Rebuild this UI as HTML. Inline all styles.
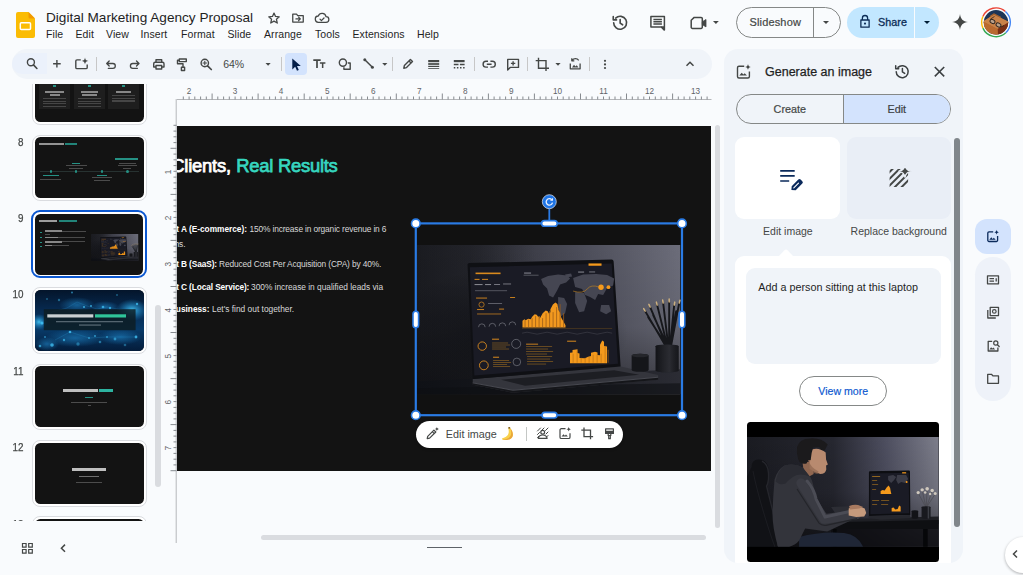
<!DOCTYPE html>
<html>
<head>
<meta charset="utf-8">
<style>
*{box-sizing:border-box;margin:0;padding:0}
html,body{width:1023px;height:575px;overflow:hidden;background:#f9fbfd;font-family:"Liberation Sans",sans-serif;color:#1f1f1f}
.abs{position:absolute}
.t{position:absolute;white-space:nowrap;line-height:1}
svg{position:absolute;overflow:visible}
#title{left:46px;top:10.500px;font-size:13.600px;color:#1f1f1f}
.menu{top:29px;font-size:10.500px;color:#1f1f1f;letter-spacing:.080px}
#toolbar{left:12px;top:49px;width:700px;height:30px;border-radius:15px;background:#f0f4f9}
.sep{position:absolute;width:1px;background:#c7c7c7;top:57px;height:14px}
.thumb{position:absolute;left:32px;width:114.500px;height:66.500px;border:1px solid #dadce0;border-radius:8px;background:#fff}
.thumb .in{position:absolute;left:1.700px;top:1.700px;width:109px;height:61px;border-radius:5.500px;background:#131313;overflow:hidden}
.num{position:absolute;font-size:11.200px;color:#444746;width:23.400px;text-align:right;left:0;line-height:1;transform:scaleX(.88);transform-origin:right center;-webkit-text-stroke:.250px #444746}
.ic{stroke:#444746;fill:none;stroke-width:1.500;stroke-linecap:round;stroke-linejoin:round}
.fi{fill:#444746;stroke:none}
.b{font-size:8.300px;font-weight:bold;color:#fff}
.r{font-size:8.400px;color:#d8d8d8;letter-spacing:-.170px}
</style>
</head>
<body>
<!-- HEADER -->
<svg style="left:16px;top:12px" width="19" height="26" viewBox="0 0 19 26"><path d="M2 0h10.500L19 6.500V24a2 2 0 0 1-2 2H2a2 2 0 0 1-2-2V2a2 2 0 0 1 2-2z" fill="#fbbc04"/><path d="M12.500 0L19 6.500h-5a1.500 1.500 0 0 1-1.500-1.500z" fill="#f29900"/><rect x="4.300" y="10.700" width="10.200" height="6.800" rx="1" fill="none" stroke="#fff" stroke-width="1.500"/></svg>
<div class="t" id="title">Digital Marketing Agency Proposal</div>
<div class="t menu" style="left:46px">File</div>
<div class="t menu" style="left:75.500px">Edit</div>
<div class="t menu" style="left:106px">View</div>
<div class="t menu" style="left:140.500px">Insert</div>
<div class="t menu" style="left:181px">Format</div>
<div class="t menu" style="left:227.500px">Slide</div>
<div class="t menu" style="left:264px">Arrange</div>
<div class="t menu" style="left:315px">Tools</div>
<div class="t menu" style="left:352.500px">Extensions</div>
<div class="t menu" style="left:417px">Help</div>
<!-- title icons -->
<svg style="left:267px;top:11px" width="14" height="14" viewBox="0 0 24 24"><path class="ic" style="stroke-width:2.200" d="M12 3.500l2.600 5.900 6.400.600-4.800 4.300 1.400 6.300L12 17.300l-5.600 3.300 1.400-6.300L3 10l6.400-.600z"/></svg>
<svg style="left:291px;top:10.500px" width="14" height="14" viewBox="0 0 24 24"><path class="ic" style="stroke-width:2.200" d="M3 5.500h6.500l2 2.500H21v11H3z M8.500 13.500h7 M13 10.500l3 3-3 3"/></svg>
<svg style="left:314px;top:11px" width="16" height="14" viewBox="0 0 28 24"><path class="ic" style="stroke-width:2.200" d="M8 19.500a5.500 5.500 0 0 1-.500-11A7 7 0 0 1 21 9.500a5 5 0 0 1 0 10z M10.500 14l2.500 2.500 4.500-4.500"/></svg>
<!-- right header -->
<svg style="left:610.200px;top:12.700px" width="19.500" height="19.500" viewBox="0 0 24 24"><path class="ic" style="stroke-width:2" d="M4.500 12a8 8 0 1 0 2.500-5.800 M4 4.500v4h4 M12.500 8v4.500l3 2"/></svg>
<svg style="left:0;top:0" width="1023" height="45" viewBox="0 0 1023 45"><path class="ic" style="stroke-width:1.500" d="M650.900 16.500h13.500v10.400h-13.500zM664.400 26.900v3.200l-3.200-3.200"/><path d="M661.200 26.900h3.200v3.200z" fill="#444746"/><path class="ic" style="stroke-width:1.500;stroke-linecap:butt" d="M653.400 19.500h8.500M653.400 21.700h8.500M653.400 23.900h8.500"/></svg>
<svg style="left:0;top:0" width="1023" height="45" viewBox="0 0 1023 45"><path class="ic" style="stroke-width:1.500" d="M691.200 20.300l3-2.900h6.900a1.200 1.200 0 0 1 1.200 1.200v8.600a1.200 1.200 0 0 1-1.200 1.200h-8.700a1.200 1.200 0 0 1-1.200-1.200z"/><path d="M702.300 21.800l3.700-2.300v7.400l-3.700-2.300z" fill="#444746" stroke="#444746" stroke-width=".800" stroke-linejoin="round"/></svg>
<svg style="left:713.200px;top:20.800px" width="5.800" height="3" viewBox="0 0 10 5"><path d="M0 0h10L5 5z" fill="#444746"/></svg>
<div class="abs" style="left:736px;top:7px;width:104.500px;height:30.500px;border:1px solid #858887;border-radius:16px"></div>
<div class="abs" style="left:813px;top:7px;width:1px;height:30.500px;background:#858887"></div>
<div class="t" style="left:749.500px;top:17px;font-size:11px;color:#444746;letter-spacing:.150px;-webkit-text-stroke:.200px #444746">Slideshow</div>
<svg style="left:823px;top:20.500px" width="6" height="3.100" viewBox="0 0 10 5"><path d="M0 0h10L5 5z" fill="#444746"/></svg>
<div class="abs" style="left:846.500px;top:7px;width:92.500px;height:30.500px;border-radius:16px;background:#c2e7ff"></div>
<div class="abs" style="left:914px;top:7px;width:1px;height:30.500px;background:#f9fbfd"></div>
<svg style="left:858.500px;top:14px" width="12" height="15" viewBox="0 0 16 20"><path d="M4.500 8V5.500a3.500 3.500 0 0 1 7 0V8 M2.500 8h11v9.500h-11z" fill="none" stroke="#0c2d57" stroke-width="1.700" stroke-linejoin="round"/><circle cx="8" cy="12.800" r="1.400" fill="#0c2d57"/></svg>
<div class="t" style="left:878px;top:17px;font-size:10.800px;color:#0c2d57;-webkit-text-stroke:.300px #0c2d57;letter-spacing:.050px">Share</div>
<svg style="left:923.500px;top:20.500px" width="6" height="3.100" viewBox="0 0 10 5"><path d="M0 0h10L5 5z" fill="#001d35"/></svg>
<svg style="left:952px;top:14.300px" width="16" height="16" viewBox="0 0 24 24"><path d="M12 0C12.900 7.500 16.500 11.100 24 12 16.500 12.900 12.900 16.500 12 24 11.100 16.500 7.500 12.900 0 12 7.500 11.100 11.100 7.500 12 0z" fill="#444746"/></svg>
<!-- avatar -->
<svg style="left:981px;top:7px" width="30" height="31" viewBox="0 0 30 31">
<defs><clipPath id="avc"><circle cx="15" cy="15.300" r="12.200"/></clipPath></defs>
<path d="M1.89 9.46A14.350 14.350 0 0 1 24.41 4.47" fill="none" stroke="#ea4335" stroke-width="1.400"/><path d="M24.41 4.47A14.350 14.350 0 0 1 24.79 25.79" fill="none" stroke="#4285f4" stroke-width="1.400"/><path d="M24.79 25.79A14.350 14.350 0 0 1 1.89 21.14" fill="none" stroke="#34a853" stroke-width="1.400"/><path d="M1.89 21.14A14.350 14.350 0 0 1 1.89 9.46" fill="none" stroke="#fbbc04" stroke-width="1.400"/>
<g clip-path="url(#avc)"><rect width="30" height="31" fill="#1d3557"/>
<path d="M2 14.500L13 7.500 28 15 27.500 20 17 29 2 22z" fill="#b5652c"/>
<path d="M2 14.500L13 7.500 28 15 16.500 22z" fill="#c98248"/>
<path d="M16.500 22L28 15 28 23 17 31z" fill="#7a2f14"/>
<path d="M2 14.500L16.500 22 17 31 2 24z" fill="#b96a30"/>
<path d="M9 9.500l4-2.500 7 3.500" stroke="#a8642e" stroke-width="1.300" fill="none"/>
<ellipse cx="11.500" cy="14.500" rx="2.600" ry="1.900" transform="rotate(28 11.500 14.500)" fill="#b9a08a" stroke="#2b2320" stroke-width=".900"/>
<ellipse cx="17.500" cy="18" rx="2.600" ry="1.900" transform="rotate(28 17.500 18)" fill="#b9a08a" stroke="#2b2320" stroke-width=".900"/>
<path d="M9.500 12l4-2.500M20 20l3-1.500" stroke="#2b2320" stroke-width=".800"/></g>
</svg>

<!-- TOOLBAR -->
<div class="abs" id="toolbar"></div>
<div class="abs" style="left:12px;top:53px;width:35px;height:20.500px;background:#ebf1fb;border-radius:10px 0 0 10px"></div>
<div class="abs" style="left:284.700px;top:52.700px;width:22.200px;height:22px;border-radius:4px;background:#d3e3fd"></div>
<div class="sep" style="left:96px"></div>
<div class="sep" style="left:281px"></div>
<div class="sep" style="left:392px"></div>
<div class="sep" style="left:474px"></div>
<div class="sep" style="left:527px"></div>
<div class="sep" style="left:589px"></div>
<svg style="left:0;top:0" width="1023" height="100" viewBox="0 0 1023 100">
<!-- search -->
<circle class="ic" cx="30.900" cy="62.200" r="3.500" style="stroke-width:1.400"/><path class="ic" d="M33.500 64.900l3.400 3.600" style="stroke-width:1.600"/>
<!-- plus -->
<path class="ic" d="M53.100 63.800h7.600M56.900 60v7.600" style="stroke-linecap:butt;stroke-width:1.400"/>
<!-- new slide -->
<path class="ic" d="M80.800 59.900h-3.800a1.200 1.200 0 0 0-1.200 1.200v6.300a1.200 1.200 0 0 0 1.200 1.200h9a1.200 1.200 0 0 0 1.200-1.200v-2.900" style="stroke-linecap:butt;stroke-width:1.400"/><path class="fi" d="M85 57.600c.3 2.200 1.200 3.100 3.400 3.400-2.200.300-3.100 1.200-3.400 3.400-.300-2.200-1.200-3.100-3.400-3.400 2.200-.300 3.100-1.200 3.400-3.400z"/>
<!-- undo -->
<path class="ic" d="M108.300 68.300h4.600a2.400 2.400 0 0 0 0-4.800h-6M109.200 61l-2.500 2.500 2.500 2.500" style="stroke-width:1.300"/>
<!-- redo -->
<path class="ic" d="M137.400 68.300h-4.600a2.400 2.400 0 0 1 0-4.800h6M136.500 61l2.500 2.500-2.500 2.500" style="stroke-width:1.300"/>
<!-- print -->
<path class="ic" d="M156 62.200v-2.400h5.700v2.400M156 67h-2.300v-3.300a1.500 1.500 0 0 1 1.500-1.500h7.300a1.500 1.500 0 0 1 1.500 1.500v3.300h-2.300M156 65.500h5.700v3.500h-5.700z" style="stroke-width:1.400"/>
<!-- paint -->
<path class="ic" d="M179.300 59h7v2.600h-7zM179.300 60.200h-1.800v3.600h5.500v3M181.400 67.200h3.200v3.300h-3.200z" style="stroke-width:1.400"/>
<!-- zoom -->
<circle class="ic" cx="204.800" cy="63" r="3.700" style="stroke-width:1.400"/><path class="ic" d="M207.600 65.800l3.700 3.700" style="stroke-width:1.700"/><path class="ic" d="M203 63h3.600M204.800 61.200v3.600" style="stroke-width:1.100"/>
<!-- dropdown -->
<path class="fi" d="M265.500 63h5.200l-2.600 2.700z"/>
<!-- cursor -->
<path d="M292.300 58.600v11l2.900-2.800 1.800 4 1.800-.800-1.800-4h3.800z" fill="#041e49"/>
<!-- Tt -->
<path class="fi" d="M313.300 59.300h7.400v1.700h-2.850v6.900h-1.700v-6.900h-2.850zM319.900 62.200h5.500v1.500h-2v4.200h-1.500v-4.200h-2z"/>
<!-- shape -->
<circle class="ic" cx="342.900" cy="62.600" r="3.600" style="stroke-width:1.400"/><path class="ic" d="M347.800 63h2.400v6.300h-6.300v-2" style="stroke-width:1.400;stroke-linecap:butt"/>
<!-- line -->
<path class="ic" d="M364.800 59.700l7.600 7.600" style="stroke-width:1.500"/><circle class="fi" cx="364.800" cy="59.700" r="1.500"/><circle class="fi" cx="372.400" cy="67.300" r="1.500"/>
<path class="fi" d="M382.200 63h5.200l-2.600 2.700z"/>
<!-- pen -->
<path class="ic" d="M403.800 68.200l.600-2.700 6-6 2.100 2.100-6 6zM409 60.900l2.100 2.100" style="stroke-width:1.400"/>
<!-- line weight -->
<path d="M428.200 61.100h11" stroke="#444746" stroke-width="2.200"/><path d="M428.200 64h11" stroke="#444746" stroke-width="1.700"/><path d="M428.200 66.400h11" stroke="#444746" stroke-width="1.200"/><path d="M428.200 68.500h11" stroke="#444746" stroke-width=".800"/>
<!-- line dash -->
<path d="M453.800 61.100h10.800" stroke="#444746" stroke-width="2.200"/><path d="M453.800 64.500h10.800" stroke="#444746" stroke-width="1.500" stroke-dasharray="4.700 1.400"/><path d="M453.800 67.800h10.800" stroke="#444746" stroke-width="1.400" stroke-dasharray="1.500 1.600"/>
<!-- link -->
<path class="ic" d="M488 61.300h-2a2.900 2.900 0 0 0 0 5.800h2M490.400 61.300h2a2.900 2.900 0 0 1 0 5.800h-2M486.800 64.200h4.800" style="stroke-width:1.400;stroke-linecap:butt"/>
<!-- comment add -->
<path class="ic" d="M507.700 59.400h10.800v8h-8.300l-2.500 2.500zM513.100 61.200v4.400M510.900 63.400h4.400" style="stroke-width:1.400;stroke-linecap:butt"/>
<!-- crop -->
<path class="ic" d="M538.500 57.800v10.400h10.500M535.700 60.600h10.300v10.300" style="stroke-width:1.400;stroke-linecap:butt;stroke-linejoin:miter"/>
<path class="fi" d="M555.400 63h5.200l-2.600 2.700z"/>
<!-- replace image -->
<path class="ic" d="M570.300 63.500v5.300h9.800v-5.300M572.200 60.300a4 4 0 0 1 6.500 0M571.800 58.300v2.500h2.500" style="stroke-width:1.300;stroke-linecap:butt"/><path class="fi" d="M572 67.400l2-2.600 1.500 1.800 1.200-1.300 1.800 2.100z"/>
<!-- dots -->
<circle class="fi" cx="605" cy="60.800" r="1.100"/><circle class="fi" cx="605" cy="64.400" r="1.100"/><circle class="fi" cx="605" cy="68" r="1.100"/>
<!-- chevron up -->
<path class="ic" d="M686.500 65.800l3.500-3.500 3.500 3.500" style="stroke-width:1.500;stroke-linecap:butt;stroke-linejoin:miter"/>
</svg>
<div class="t" style="left:223.200px;top:58.800px;font-size:10.500px;color:#444746">64%</div>

<!-- FILMSTRIP -->
<div class="abs" style="left:0;top:83.500px;width:162px;height:437.600px;overflow:hidden">
<div class="thumb" style="top:-25.4px"><div class="in"><div class="abs" style="left:0;top:0;width:109px;height:61px;opacity:.780;filter:blur(.300px)"><div class="abs" style="left:4.800px;top:20px;width:30.800px;height:28.100px;background:#222"></div><div class="abs" style="left:39.200px;top:20px;width:30.800px;height:28.100px;background:#222"></div><div class="abs" style="left:73.200px;top:20px;width:30.800px;height:28.100px;background:#222"></div>
<div class="abs" style="left:18.700px;top:24px;width:3px;height:2.500px;background:#2bb5a4"></div><div class="abs" style="left:53px;top:24px;width:3px;height:2.500px;background:#2bb5a4"></div><div class="abs" style="left:87px;top:24px;width:3px;height:2.500px;background:#2bb5a4"></div>
<div class="abs" style="left:10.500px;top:30.300px;width:19px;height:1.700px;background:#aaa"></div><div class="abs" style="left:15px;top:33.100px;width:10px;height:1.700px;background:#aaa"></div>
<div class="abs" style="left:46px;top:30.300px;width:17px;height:1.700px;background:#aaa"></div><div class="abs" style="left:47px;top:33.100px;width:15px;height:1.700px;background:#aaa"></div>
<div class="abs" style="left:81px;top:30.300px;width:15px;height:1.700px;background:#aaa"></div>
<div class="abs" style="left:8.500px;top:37px;width:23px;height:10px;background:repeating-linear-gradient(#555 0 1px,#222 1px 2.750px)"></div>
<div class="abs" style="left:43px;top:37px;width:23px;height:10px;background:repeating-linear-gradient(#555 0 1px,#222 1px 2.750px)"></div>
<div class="abs" style="left:77px;top:34.300px;width:23px;height:7.500px;background:repeating-linear-gradient(#555 0 1px,#222 1px 2.750px)"></div></div></div></div>
<div class="num" style="top:-23.2px">7</div>
<div class="thumb" style="top:51.0px"><div class="in"><div class="abs" style="left:0;top:0;width:109px;height:61px;opacity:.780;filter:blur(.300px)"><div class="abs" style="left:4.500px;top:6px;width:25px;height:2px;background:#b8b8b8"></div><div class="abs" style="left:30.500px;top:6px;width:12px;height:2px;background:#27a596"></div>
<div class="abs" style="left:5px;top:34.200px;width:99px;height:.700px;background:#2e3b3a"></div>
<div class="abs" style="left:15px;top:33.200px;width:2.500px;height:2.500px;border-radius:2px;background:#2bb5a4"></div><div class="abs" style="left:40px;top:33.200px;width:2.500px;height:2.500px;border-radius:2px;background:#2bb5a4"></div><div class="abs" style="left:66px;top:33.200px;width:2.500px;height:2.500px;border-radius:2px;background:#2bb5a4"></div><div class="abs" style="left:91.500px;top:33.200px;width:2.500px;height:2.500px;border-radius:2px;background:#2bb5a4"></div>
<div class="abs" style="left:8px;top:37.500px;width:16px;height:1.500px;background:#2bb5a4"></div><div class="abs" style="left:5.500px;top:42px;width:21px;height:1px;background:#5c5c5c"></div>
<div class="abs" style="left:37px;top:25.500px;width:8px;height:1.500px;background:#2bb5a4"></div><div class="abs" style="left:31px;top:28.300px;width:21px;height:1px;background:#5c5c5c"></div><div class="abs" style="left:34px;top:31px;width:14px;height:1px;background:#5c5c5c"></div>
<div class="abs" style="left:62px;top:37.500px;width:10px;height:1.500px;background:#2bb5a4"></div><div class="abs" style="left:57px;top:39.800px;width:20px;height:1px;background:#5c5c5c"></div><div class="abs" style="left:59px;top:42.500px;width:16px;height:1px;background:#5c5c5c"></div>
<div class="abs" style="left:80.500px;top:21px;width:23px;height:1.500px;background:#2bb5a4"></div><div class="abs" style="left:84px;top:25.500px;width:17px;height:1px;background:#5c5c5c"></div><div class="abs" style="left:83px;top:28.300px;width:19px;height:1px;background:#5c5c5c"></div><div class="abs" style="left:88px;top:31px;width:8px;height:1px;background:#5c5c5c"></div></div></div></div>
<div class="num" style="top:53.2px">8</div>
<div class="abs" style="left:31px;top:126.3px;width:115.900px;height:68.600px;border:2.200px solid #0b57d0;border-radius:9px;background:#fff"></div>
<div class="abs" style="left:34.700px;top:130.1px;width:108.600px;height:61px;border-radius:5.500px;background:#131313;overflow:hidden"><div class="abs" style="left:0;top:0;width:109px;height:61px;opacity:.780;filter:blur(.300px)"><div class="abs" style="left:4.500px;top:6px;width:18px;height:2.200px;background:#c4c4c4"></div><div class="abs" style="left:24.200px;top:6px;width:18.600px;height:2.200px;background:#27a596"></div>
<div class="abs" style="left:5px;top:18px;width:2px;height:1px;background:#2bb5a4"></div><div class="abs" style="left:5px;top:23.800px;width:2px;height:1px;background:#2bb5a4"></div><div class="abs" style="left:5px;top:28px;width:2px;height:1px;background:#2bb5a4"></div><div class="abs" style="left:5px;top:32px;width:2px;height:1px;background:#2bb5a4"></div>
<div class="abs" style="left:10px;top:16.800px;width:17px;height:1.600px;background:#a9a9a9"></div><div class="abs" style="left:27px;top:17px;width:24px;height:1.200px;background:#5a5a5a"></div><div class="abs" style="left:10px;top:20.300px;width:5px;height:1px;background:#5a5a5a"></div>
<div class="abs" style="left:10px;top:23.300px;width:13px;height:1.600px;background:#a9a9a9"></div><div class="abs" style="left:23px;top:23.500px;width:27px;height:1.200px;background:#5a5a5a"></div>
<div class="abs" style="left:10px;top:27.500px;width:17px;height:1.600px;background:#a9a9a9"></div><div class="abs" style="left:27px;top:27.700px;width:23px;height:1.200px;background:#5a5a5a"></div>
<div class="abs" style="left:10px;top:31.300px;width:7px;height:1.600px;background:#a9a9a9"></div><div class="abs" style="left:17px;top:31.500px;width:17px;height:1.200px;background:#5a5a5a"></div>
</div><svg style="left:56.400px;top:20.700px;filter:blur(.300px)" width="47.200" height="26.700" viewBox="0 0 263 149" preserveAspectRatio="none"><use href="#photo1"/></svg></div>
<div class="num" style="top:129.6px">9</div>
<div class="thumb" style="top:203.7px"><div class="in"><svg style="left:0;top:0;filter:blur(.350px)" width="109" height="61" viewBox="0 0 109 61"><defs>
<linearGradient id="t10bg" x1="0" y1="0" x2="0" y2="1"><stop offset="0" stop-color="#04152b"/><stop offset=".35" stop-color="#072b52"/><stop offset=".65" stop-color="#083a68"/><stop offset="1" stop-color="#041c3a"/></linearGradient>
<radialGradient id="t10a" cx="50%" cy="50%" r="50%"><stop offset="0" stop-color="#43c3f2" stop-opacity=".95"/><stop offset=".5" stop-color="#2a9fdc" stop-opacity=".5"/><stop offset="1" stop-color="#1e8ac4" stop-opacity="0"/></radialGradient>
<radialGradient id="t10b" cx="50%" cy="50%" r="50%"><stop offset="0" stop-color="#1b78b6" stop-opacity=".7"/><stop offset="1" stop-color="#1b78b6" stop-opacity="0"/></radialGradient></defs>
<rect width="109" height="61" fill="url(#t10bg)"/>
<ellipse cx="97" cy="20" rx="16" ry="11" fill="url(#t10a)"/><ellipse cx="4" cy="32" rx="9" ry="8" fill="url(#t10a)"/><ellipse cx="42" cy="15" rx="18" ry="8" fill="url(#t10b)"/><ellipse cx="70" cy="17" rx="14" ry="6" fill="url(#t10b)"/><ellipse cx="40" cy="48" rx="30" ry="9" fill="url(#t10b)"/><ellipse cx="85" cy="47" rx="22" ry="8" fill="url(#t10b)"/><ellipse cx="12" cy="54" rx="12" ry="7" fill="url(#t10b)"/>
<g fill="#3fbdf0"><circle cx="7" cy="33" r="1.600" opacity=".95"/><circle cx="35" cy="42" r="1.300" opacity=".9"/><circle cx="37" cy="2.500" r="1" opacity=".6"/><circle cx="24" cy="10" r="1.200" opacity=".45"/><circle cx="49" cy="17" r="1.100" opacity=".8"/><circle cx="56" cy="16" r="1" opacity=".8"/><circle cx="68" cy="17" r="1.300" opacity=".8"/><circle cx="75" cy="18" r="1.200" opacity=".8"/><circle cx="102" cy="14" r="1.200" opacity=".8"/><circle cx="101" cy="47" r="1.400" opacity=".85"/><circle cx="80" cy="49" r="1.400" opacity=".6"/><circle cx="72" cy="47" r="1.100" opacity=".6"/><circle cx="65" cy="52" r="1.300" opacity=".5"/><circle cx="60" cy="46" r="1" opacity=".7"/><circle cx="54" cy="48" r="1.100" opacity=".6"/><circle cx="43" cy="54" r="1.700" opacity=".45"/><circle cx="29" cy="50" r="1.200" opacity=".7"/><circle cx="17" cy="55" r="1.800" opacity=".8"/><circle cx="5" cy="56" r="1.300" opacity=".7"/><circle cx="10" cy="47" r="1" opacity=".6"/><circle cx="90" cy="55" r="1.300" opacity=".4"/><circle cx="12" cy="9" r="1" opacity=".4"/><circle cx="82" cy="5" r="1" opacity=".4"/></g>
<path d="M32 18L42 12 52 16 62 19 72 17 88 20M20 50L35 42 54 48 72 47 101 47M7 33L17 22 32 18" stroke="#2c9fd8" stroke-width=".350" fill="none" opacity=".6"/>
<rect x="8.800" y="19.200" width="91.800" height="21" fill="#0d1d22" opacity=".84"/>
<rect x="12.300" y="24.300" width="46" height="3.200" fill="#c9cfd2"/><rect x="60" y="24.300" width="31" height="3.200" fill="#2fc59a"/><rect x="21" y="31.300" width="67" height=".900" fill="#74848e"/><rect x="44" y="34.600" width="22" height=".900" fill="#74848e"/></svg></div></div>
<div class="num" style="top:205.9px">10</div>
<div class="thumb" style="top:280.1px"><div class="in"><div class="abs" style="left:0;top:0;width:109px;height:61px;opacity:.780;filter:blur(.300px)"><div class="abs" style="left:28.500px;top:22.500px;width:34.500px;height:3px;background:#f0f0f0"></div><div class="abs" style="left:64.500px;top:22.500px;width:14px;height:3px;background:#35e0c8"></div>
<div class="abs" style="left:50px;top:30.800px;width:8.500px;height:.900px;background:#2bb5a4"></div>
<div class="abs" style="left:36px;top:36px;width:36px;height:.900px;background:#5c5c5c"></div><div class="abs" style="left:53px;top:39px;width:3px;height:.900px;background:#5c5c5c"></div></div></div></div>
<div class="num" style="top:282.3px">11</div>
<div class="thumb" style="top:356.5px"><div class="in"><div class="abs" style="left:0;top:0;width:109px;height:61px;opacity:.780;filter:blur(.300px)"><div class="abs" style="left:37px;top:25px;width:34px;height:3.600px;background:#f0f0f0"></div>
<div class="abs" style="left:44px;top:33.500px;width:20px;height:1px;background:#8a8a8a"></div><div class="abs" style="left:41px;top:39px;width:26px;height:.900px;background:#5c5c5c"></div></div></div></div>
<div class="num" style="top:358.7px">12</div>
<div class="thumb" style="top:432.8px"><div class="in"></div></div>
<div class="num" style="top:435.0px">13</div>
</div>
<div class="abs" style="left:155.300px;top:305px;width:5.700px;height:182px;border-radius:3px;background:#dadce0"></div>
<svg style="left:0;top:530px" width="100" height="40" viewBox="0 530 100 40"><path d="M22.500 543.500h3.600v3.600h-3.600zM28.700 543.500h3.600v3.600h-3.600zM22.500 549.500h3.600v3.600h-3.600zM28.700 549.500h3.600v3.600h-3.600z" fill="none" stroke="#444746" stroke-width="1.200"/><path d="M65 544.600l-3.600 3.600 3.600 3.600" fill="none" stroke="#444746" stroke-width="1.500"/></svg>
<svg style="left:0;top:0" width="1023" height="575" viewBox="0 0 1023 575">
<path d="M177 99.5H711.5 M176.200 99V543" stroke="#b5b7ba" stroke-width="1" fill="none"/>
<path d="M183.3 99.5v-3 M189.1 99.5v-3 M194.8 99.5v-3 M200.6 99.5v-3 M206.3 99.5v-3 M212.1 99.5v-6 M217.8 99.5v-3 M223.6 99.5v-3 M229.3 99.5v-3 M235.1 99.5v-3 M240.9 99.5v-3 M246.6 99.5v-3 M252.4 99.5v-3 M258.1 99.5v-6 M263.9 99.5v-3 M269.6 99.5v-3 M275.4 99.5v-3 M281.1 99.5v-3 M286.9 99.5v-3 M292.7 99.5v-3 M298.4 99.5v-3 M304.2 99.5v-6 M309.9 99.5v-3 M315.7 99.5v-3 M321.4 99.5v-3 M327.2 99.5v-3 M333.0 99.5v-3 M338.7 99.5v-3 M344.5 99.5v-3 M350.2 99.5v-6 M356.0 99.5v-3 M361.7 99.5v-3 M367.5 99.5v-3 M373.2 99.5v-3 M379.0 99.5v-3 M384.8 99.5v-3 M390.5 99.5v-3 M396.3 99.5v-6 M402.0 99.5v-3 M407.8 99.5v-3 M413.5 99.5v-3 M419.3 99.5v-3 M425.1 99.5v-3 M430.8 99.5v-3 M436.6 99.5v-3 M442.3 99.5v-6 M448.1 99.5v-3 M453.8 99.5v-3 M459.6 99.5v-3 M465.3 99.5v-3 M471.1 99.5v-3 M476.9 99.5v-3 M482.6 99.5v-3 M488.4 99.5v-6 M494.1 99.5v-3 M499.9 99.5v-3 M505.6 99.5v-3 M511.4 99.5v-3 M517.2 99.5v-3 M522.9 99.5v-3 M528.7 99.5v-3 M534.4 99.5v-6 M540.2 99.5v-3 M545.9 99.5v-3 M551.7 99.5v-3 M557.5 99.5v-3 M563.2 99.5v-3 M569.0 99.5v-3 M574.7 99.5v-3 M580.5 99.5v-6 M586.2 99.5v-3 M592.0 99.5v-3 M597.7 99.5v-3 M603.5 99.5v-3 M609.3 99.5v-3 M615.0 99.5v-3 M620.8 99.5v-3 M626.5 99.5v-6 M632.3 99.5v-3 M638.0 99.5v-3 M643.8 99.5v-3 M649.5 99.5v-3 M655.3 99.5v-3 M661.1 99.5v-3 M666.8 99.5v-3 M672.6 99.5v-6 M678.3 99.5v-3 M684.1 99.5v-3 M689.8 99.5v-3 M695.6 99.5v-3 M701.4 99.5v-3 M707.1 99.5v-3" stroke="#868a8f" stroke-width="1" fill="none"/>
<path d="M176.5 125.3h-3 M176.5 131.1h-3 M176.5 136.8h-3 M176.5 142.6h-3 M176.5 148.3h-6 M176.5 154.1h-3 M176.5 159.8h-3 M176.5 165.6h-3 M176.5 171.3h-3 M176.5 177.1h-3 M176.5 182.9h-3 M176.5 188.6h-3 M176.5 194.4h-6 M176.5 200.1h-3 M176.5 205.9h-3 M176.5 211.6h-3 M176.5 217.4h-3 M176.5 223.2h-3 M176.5 228.9h-3 M176.5 234.7h-3 M176.5 240.4h-6 M176.5 246.2h-3 M176.5 251.9h-3 M176.5 257.7h-3 M176.5 263.4h-3 M176.5 269.2h-3 M176.5 275.0h-3 M176.5 280.7h-3 M176.5 286.5h-6 M176.5 292.2h-3 M176.5 298.0h-3 M176.5 303.7h-3 M176.5 309.5h-3 M176.5 315.3h-3 M176.5 321.0h-3 M176.5 326.8h-3 M176.5 332.5h-6 M176.5 338.3h-3 M176.5 344.0h-3 M176.5 349.8h-3 M176.5 355.6h-3 M176.5 361.3h-3 M176.5 367.1h-3 M176.5 372.8h-3 M176.5 378.6h-6 M176.5 384.3h-3 M176.5 390.1h-3 M176.5 395.8h-3 M176.5 401.6h-3 M176.5 407.4h-3 M176.5 413.1h-3 M176.5 418.9h-3 M176.5 424.6h-6 M176.5 430.4h-3 M176.5 436.1h-3 M176.5 441.9h-3 M176.5 447.6h-3 M176.5 453.4h-3 M176.5 459.2h-3 M176.5 464.9h-3 M176.5 470.7h-6" stroke="#868a8f" stroke-width="1" fill="none"/>
<g font-size="8.200" fill="#5f6368" font-family="Liberation Sans, sans-serif"><text x="189.1" y="93.8" text-anchor="middle">2</text><text x="235.1" y="93.8" text-anchor="middle">3</text><text x="281.1" y="93.8" text-anchor="middle">4</text><text x="327.2" y="93.8" text-anchor="middle">5</text><text x="373.2" y="93.8" text-anchor="middle">6</text><text x="419.3" y="93.8" text-anchor="middle">7</text><text x="465.3" y="93.8" text-anchor="middle">8</text><text x="511.4" y="93.8" text-anchor="middle">9</text><text x="557.5" y="93.8" text-anchor="middle">10</text><text x="603.5" y="93.8" text-anchor="middle">11</text><text x="649.5" y="93.8" text-anchor="middle">12</text><text x="695.6" y="93.8" text-anchor="middle">13</text><text transform="translate(171 171.9) rotate(-90)" text-anchor="middle">1</text><text transform="translate(171 218.0) rotate(-90)" text-anchor="middle">2</text><text transform="translate(171 264.1) rotate(-90)" text-anchor="middle">3</text><text transform="translate(171 310.1) rotate(-90)" text-anchor="middle">4</text><text transform="translate(171 356.2) rotate(-90)" text-anchor="middle">5</text><text transform="translate(171 402.2) rotate(-90)" text-anchor="middle">6</text><text transform="translate(171 448.2) rotate(-90)" text-anchor="middle">7</text></g>
</svg>
<svg width="0" height="0" style="left:0;top:0"><defs>
<linearGradient id="p1wall" x1="0" y1="0" x2="1" y2="0"><stop offset="0" stop-color="#23242a"/><stop offset=".25" stop-color="#2f3038"/><stop offset=".6" stop-color="#4a4b57"/><stop offset="1" stop-color="#6c6d7a"/></linearGradient>
<linearGradient id="p1shade" x1="0" y1="0" x2="0" y2="1"><stop offset="0" stop-color="#000" stop-opacity="0"/><stop offset=".55" stop-color="#000" stop-opacity=".08"/><stop offset="1" stop-color="#000" stop-opacity=".45"/></linearGradient>
<radialGradient id="p1lapsh" cx="35%" cy="60%" r="45%"><stop offset="0" stop-color="#0d0e12" stop-opacity=".75"/><stop offset="1" stop-color="#0d0e12" stop-opacity="0"/></radialGradient>
<linearGradient id="p1left" x1="0" y1="0" x2="1" y2="0"><stop offset="0" stop-color="#08090c" stop-opacity=".32"/><stop offset=".2" stop-color="#08090c" stop-opacity=".3"/><stop offset=".45" stop-color="#08090c" stop-opacity="0"/></linearGradient>
<linearGradient id="p1desk" x1="0" y1="0" x2="1" y2="0"><stop offset="0" stop-color="#0f1116"/><stop offset=".5" stop-color="#17181d"/><stop offset="1" stop-color="#2b2c34"/></linearGradient>
<g id="photo1">
<rect width="263" height="149" fill="url(#p1wall)"/>
<rect width="263" height="149" fill="url(#p1shade)"/>
<rect width="263" height="149" fill="url(#p1lapsh)"/>
<rect width="263" height="149" fill="url(#p1left)"/>
<!-- desk -->
<path d="M0 136L263 124V149H0z" fill="url(#p1desk)"/>
<path d="M0 143L263 138V149H0z" fill="#0e0f13" opacity=".6"/>
<!-- laptop base -->
<path d="M55.700 133.700L203.500 121.300 241 129.800 241 134.500 96 147.500 55.700 139.500z" fill="#34353c"/>
<path d="M55.700 137.300L96 144.800 241 131.800 241 134.500 96 147.500 55.700 139.500z" fill="#15161a"/>
<path d="M84 134.500L197 125 222 129.500 108 140.500z" fill="#1d1e23"/>
<path d="M55.700 137.600L96 145 241 132" stroke="#5a5b64" stroke-width=".700" fill="none"/>
<!-- lid -->
<path d="M50.500 19.500Q50.500 18 52.500 18L194.500 14.500Q196.300 14.500 196.500 16.500L203.500 121.300 55.700 133.700z" fill="#0f1014"/>
<path d="M52.800 22.300L194.500 18.400 200.800 118.500 57.300 130.300z" fill="#1a1b25"/>
<!-- map -->
<g fill="#454652"><path d="M124 34l7-3 10-1.500 9 1 3 3-4 4-6 2-3 6-4 7-4-2-2-7-4-4z"/><path d="M141 52l6 1 3 6-2 9-4 3-3-8z"/><path d="M156 33l10-3.500 13-.500 11 1 7 3.500-1 7-6 2.500-4 7-5-1-3 6-5-3-5-2-3-6-7-2z"/><path d="M158 47l9 1 3 8-3 10-5 1-4-9z"/><path d="M184 60l8 0 2 6-5 3-6-3z"/><path d="M148 29.500l6-1 1 3-6 1z"/></g>
<path d="M156 46q10 3 14-2t12-2" stroke="#c8861f" stroke-width=".600" fill="none"/>
<circle cx="183.900" cy="42.100" r="2.700" fill="#f59a1c"/><circle cx="191.300" cy="42.100" r="1.900" fill="#f59a1c"/>
<rect x="171.400" y="18.400" width="13" height="2.300" fill="#f59a1c"/>
<!-- chart 1 -->
<path d="M105.400 82.400V75.500l2-1.500 1.200 1 2.500-1.500 2.500.700 1.500-2.500 2.500-2.700 2 .500 1.500 2 1.500-.500V73.500l3-5.500 3-2.700 2 .800 1.200 2.200 1.500-1.200V64l2.500-4.500 2.500-2 2 1.500 1.200 6 1.500 2.500 1.200 5 2 3.500 2.200 4.200V82.400z" fill="#f2991f"/>
<path d="M108 82V75M111.500 82V74.500M115 82V73M118.500 82V71M122 82V72M125.500 82V73M129 82V68M132.500 82V66M136 82V67M139.500 82V62M143 82V59M146.500 82V68" stroke="#9c5e18" stroke-width=".800"/>
<path d="M105 83.300H195" stroke="#6b4a1c" stroke-width=".500"/>
<path d="M105 88q5-2 10 0t10 0 10 0 10 0 10 0 10 0 10 0 10 0 10 0" stroke="#4a4b55" stroke-width=".500" fill="none"/>
<!-- chart 2 -->
<path d="M152.900 117.900V107.500l2.500-.300v-2.500l5-.700v3.700l2 .500v4.500l5.500.300 3-1.500 3-.800v-3.200l4-.900 2.500.600v2.600l2.500.200v-10.500l2.200-4.200 1.800 1.200v4.300l3 .400v16.700z" fill="#f59a1c"/>
<path d="M156 117.500v-9M160 117.500v-12M164 117.500v-5M168 117.500v-5M172 117.500v-6M176 117.500v-8M180 117.500v-8M184 117.500v-9M188 117.500v-17M191 117.500v-13" stroke="#b06c18" stroke-width=".600"/>
<!-- left column -->
<g fill="#d98a1e"><rect x="58.500" y="27.500" width="25" height="1.600"/><rect x="57.500" y="33.800" width="5" height="1"/><rect x="65" y="33.800" width="6" height="1"/><rect x="59" y="52.500" width="11" height=".900"/><rect x="93" y="52" width="5" height=".900"/><rect x="60" y="64" width="7" height=".900"/><rect x="82" y="63.500" width="5" height=".900"/><rect x="60" y="68.500" width="24" height=".700"/><rect x="75" y="93.500" width="7" height="1"/><rect x="76" y="111.500" width="6" height="1"/><rect x="109" y="98.500" width="12" height=".900"/><rect x="150" y="95.500" width="9" height="1"/></g>
<g fill="#8c8d96"><rect x="57.500" y="39" width="8" height="1"/><rect x="68" y="39" width="6" height="1"/><rect x="77" y="39" width="6" height=".800"/><rect x="86" y="38.500" width="8" height=".800"/><rect x="58" y="45.500" width="32" height=".500"/><rect x="71" y="58" width="14" height=".600"/><rect x="107" y="27.500" width="7" height="1"/><rect x="106.500" y="29.800" width="15" height=".500"/><rect x="161" y="26.500" width="6" height="1"/><rect x="172" y="26.500" width="6" height=".800"/></g>
<g fill="none" stroke="#d98a1e" stroke-width=".900"><circle cx="65.200" cy="100.900" r="4.200"/><circle cx="66.800" cy="120.100" r="4.400"/><circle cx="64.500" cy="59.500" r="2.600" stroke-width=".700"/></g>
<g fill="none" stroke="#85868f" stroke-width=".600"><circle cx="99.100" cy="98.700" r="4.500"/><circle cx="99.800" cy="116.700" r="3.800"/><path d="M61.500 82a3.300 3.300 0 0 1 6.600 0M72 81.500a3.300 3.300 0 0 1 6.600 0M82 81a3.300 3.300 0 0 1 6.600 0M92 80a3.300 3.300 0 0 1 6.600 0"/></g>
<g fill="#b0781f" opacity=".85"><rect x="75" y="97.500" width="16" height=".600"/><rect x="75" y="99.500" width="18" height=".600"/><rect x="75" y="101.500" width="14" height=".600"/><rect x="75" y="103.500" width="17" height=".600"/><rect x="76" y="115" width="16" height=".600"/><rect x="76" y="117" width="18" height=".600"/><rect x="76" y="119" width="14" height=".600"/><rect x="76" y="121" width="17" height=".600"/><rect x="109" y="101" width="26" height=".600"/><rect x="109" y="103.500" width="22" height=".600"/><rect x="109" y="106" width="27" height=".600"/><rect x="109" y="108.500" width="21" height=".600"/><rect x="110" y="111" width="25" height=".600"/><rect x="110" y="113.500" width="23" height=".600"/><rect x="110" y="116" width="26" height=".600"/><rect x="110" y="118.500" width="19" height=".600"/></g>
<!-- jar -->
<path d="M214.500 110.500q0-2 8.500-2t8.500 2v14q0 2-8.500 2t-8.500-2z" fill="#15161a"/><ellipse cx="223" cy="110.300" rx="8.500" ry="1.800" fill="#25262b"/>
<!-- pencils -->
<g stroke="#16171b" stroke-width="1.900" stroke-linecap="round"><path d="M248 100L228 66M249 100L233 62M250 100L240 60M251 100L246 58M252 100L252 57M253 100L257 60M254 100L262 58M250 100L236 70M252 100L259 66M249 100L231 72"/></g>
<g stroke="#cdb07e" stroke-width="1.500" stroke-linecap="round"><path d="M228 66l-1.500-2.600M233 62l-1.300-2.800M240 60l-.800-3M246 58l-.500-3M252 57l0-3M257 60l.600-3M262 58l.800-2.800"/></g>
<path d="M238.500 101q0-1.800 11.500-1.800t11.500 1.800V125q0 2-11.500 2t-11.500-2z" fill="#1b1c21"/><path d="M238.500 101q0-1.800 11.500-1.800t11.500 1.800V125q0 2-11.500 2t-11.500-2z" fill="url(#p1cup)"/>
</g>
<linearGradient id="p1cup" x1="0" y1="0" x2="1" y2="0"><stop offset="0" stop-color="#0c0d10" stop-opacity=".6"/><stop offset=".6" stop-color="#3a3b42" stop-opacity=".5"/><stop offset="1" stop-color="#0c0d10" stop-opacity=".3"/></linearGradient>
</defs></svg>

<!-- CANVAS -->
<div class="abs" id="slide" style="left:176.500px;top:125.500px;width:534.500px;height:345.200px;background:#131313;overflow:hidden">
<div class="abs" style="left:-176.500px;top:-125.500px;width:1023px;height:575px">
<div class="t" style="left:80px;width:150.900px;text-align:right;top:157.200px;font-size:18.400px;color:#fff;-webkit-text-stroke:.750px #fff;letter-spacing:-.200px">Real Clients,</div>
<div class="t" style="left:236.300px;top:157.200px;font-size:18.400px;color:#36d6bf;-webkit-text-stroke:.750px #36d6bf;letter-spacing:-.250px">Real Results</div>
<div class="t b" style="left:132px;width:115px;text-align:right;top:225.100px">Client A (E-commerce):</div><div class="t r" style="left:249.500px;top:225.300px;letter-spacing:-.153px">150% increase in organic revenue in 6</div>
<div class="t r" style="left:154px;width:31.300px;text-align:right;top:239.700px">months.</div>
<div class="t b" style="left:117px;width:100px;text-align:right;top:260.200px;letter-spacing:-.100px">Client B (SaaS):</div><div class="t r" style="left:219px;top:260.400px;letter-spacing:-.133px">Reduced Cost Per Acquisition (CPA) by 40%.</div>
<div class="t b" style="left:149.300px;width:100px;text-align:right;top:282.900px;letter-spacing:-.100px">Client C (Local Service):</div><div class="t r" style="left:251px;top:283.100px;letter-spacing:-.032px">300% increase in qualified leads via</div>
<div class="t b" style="left:109.500px;width:100px;text-align:right;top:304.700px">Your Business:</div><div class="t r" style="left:212px;top:304.900px;letter-spacing:0">Let's find out together.</div>
<!-- image -->
<div class="abs" style="left:416px;top:223.400px;width:266px;height:192px;background:#111111"></div>
<svg style="left:417.400px;top:244.500px;filter:blur(.450px)" width="263.200" height="149.300" viewBox="0 0 263 149" preserveAspectRatio="none"><use href="#photo1"/></svg>
</div>
</div>
<!-- selection -->
<svg style="left:0;top:0" width="1023" height="575" viewBox="0 0 1023 575">
<path d="M549.300 209v14" stroke="#2a7be4" stroke-width="1.800"/>
<rect x="415.800" y="223.400" width="266.200" height="191.800" fill="none" stroke="#2a7be4" stroke-width="2.200"/>
<g fill="#fff" stroke="#2a7be4" stroke-width="1.600">
<circle cx="415.800" cy="223.400" r="4.300"/><circle cx="682" cy="223.400" r="4.300"/><circle cx="415.800" cy="415.200" r="4.300"/><circle cx="682" cy="415.200" r="4.300"/>
<rect x="541.600" y="220.600" width="15.600" height="5.600" rx="2.800"/><rect x="542" y="412.400" width="15" height="5.600" rx="2.800"/>
<rect x="413" y="311.300" width="5.600" height="16.400" rx="2.800"/><rect x="679.200" y="311.300" width="5.600" height="16.400" rx="2.800"/>
</g>
<circle cx="549.300" cy="201.700" r="7" fill="#1f75e6" stroke="#dfe6f3" stroke-width=".700"/>
<path d="M551.700 199.700a3.200 3.200 0 1 0 .800 2.900" fill="none" stroke="#e8f0fe" stroke-width="1.300"/><path d="M553 197.800v3h-3z" fill="#e8f0fe"/>
</svg>
<!-- floating toolbar -->
<div class="abs" style="left:415.600px;top:420.800px;width:207.500px;height:26.900px;border-radius:13.500px;background:#fff;box-shadow:0 1px 3px rgba(0,0,0,.3)"></div>
<div class="abs" style="left:525.800px;top:427px;width:1px;height:14px;background:#c4c7c5"></div>
<div class="t" style="left:445.800px;top:428.900px;font-size:10.800px;color:#444746">Edit image</div>
<svg style="left:0;top:0" width="1023" height="575" viewBox="0 0 1023 575">
<!-- pen sparkle -->
<path class="ic" d="M427.200 438.700l.500-2.400 6.200-6.200 1.900 1.900-6.200 6.200zM432.300 431.700l1.900 1.900" style="stroke-width:1.200"/><path class="fi" d="M436.900 426.800c.2 1.400.8 2 2.200 2.200-1.400.200-2 .800-2.200 2.200-.200-1.400-.800-2-2.200-2.200 1.400-.200 2-.800 2.200-2.200z"/>
<!-- banana -->
<path d="M508.300 427.200l1.600-.3.700 1.900c1.600 2 2.500 4.300 2.200 6.600-.500 3.400-4.500 5.300-10.300 4.300l-.600-1.300c3.800-.600 6.400-2.700 6.800-5.800.200-1.700-.200-3.600-.400-5.400z" fill="#f9d14b"/>
<path d="M510.600 428.800c1.600 2 2.500 4.300 2.200 6.600-.500 3.400-4.500 5.300-10.300 4.300 4.600-.300 8.100-2.200 8.600-5.500.300-1.800-.100-3.700-.500-5.400z" fill="#e9a53a"/>
<path d="M508.300 427.200l1.600-.3.500 1.500-1.900.4z" fill="#7a5a2a"/>
<!-- bg remove -->
<g class="ic" style="stroke-width:1"><path d="M537.500 431l3-3M537.500 434.500l2-2M541 431l3-3M545.500 430.500l2.500-2.500M546 434l2-2M537.500 437.500l1.500-1.500M546.500 437l1.500-1.500"/><circle cx="542.700" cy="432.200" r="1.900" style="stroke-width:1.200"/><path d="M538.300 438.300c.5-2.400 2.300-3.300 4.400-3.300s3.900.900 4.400 3.300z" style="stroke-width:1.200"/></g>
<!-- image sparkle -->
<path class="ic" d="M565.500 428.700h-4.200a1.300 1.300 0 0 0-1.300 1.300v7.200a1.300 1.300 0 0 0 1.300 1.300h7.400a1.300 1.300 0 0 0 1.300-1.300v-4" style="stroke-width:1.200;stroke-linecap:butt"/><path class="fi" d="M568.700 426.800c.2 1.500.9 2.200 2.400 2.400-1.500.200-2.200.900-2.400 2.400-.200-1.500-.900-2.200-2.400-2.400 1.500-.200 2.200-.900 2.400-2.400zM561.500 436.600l2-2.400 1.400 1.500 1.100-1.100 1.900 2z"/>
<!-- crop -->
<path class="ic" d="M584 427.500v9.200h9.100M581.300 430.200h9.200v9.100" style="stroke-width:1.300;stroke-linecap:butt;stroke-linejoin:miter"/>
<!-- brush -->
<path class="ic" d="M605.600 428.800h7.800v4.700h-7.800zM605.600 431.300h7.800M608.200 433.500v2h2.600v-2M608.700 435.500h1.600v3.200h-1.600z" style="stroke-width:1.200;stroke-linecap:butt"/><path class="fi" d="M605.600 431.300h7.800v2.200h-7.800z"/>
</svg>
<!-- scrollbars -->
<div class="abs" style="left:714.800px;top:125.200px;width:5.500px;height:403px;border-radius:3px;background:#dadce0"></div>
<div class="abs" style="left:261px;top:534.700px;width:445px;height:5.800px;border-radius:3px;background:#dadce0"></div>
<div class="abs" style="left:427px;top:546.600px;width:35px;height:1.300px;background:#5f6368"></div>

<!-- PANEL -->
<div class="abs" id="panel" style="left:723.600px;top:48.800px;width:239.400px;height:514.200px;border-radius:14px;background:#f0f4f9;overflow:hidden">
<div class="abs" style="left:-723.600px;top:-48.800px;width:1023px;height:575px">
<!-- header -->
<svg style="left:0;top:0" width="1023" height="140" viewBox="0 0 1023 140">
<path class="ic" d="M744.200 66.200h-5.200a1.500 1.500 0 0 0-1.500 1.500v8.800a1.500 1.500 0 0 0 1.500 1.500h8.900a1.500 1.500 0 0 0 1.500-1.500v-5" style="stroke-width:1.400;stroke-linecap:butt"/><path class="fi" d="M748 64c.3 1.900 1.100 2.700 3 3-1.900.300-2.700 1.100-3 3-.300-1.900-1.100-2.700-3-3 1.900-.300 2.700-1.100 3-3zM739.300 75.600l2.400-2.900 1.700 1.900 1.300-1.400 2.300 2.400z"/>
<path class="ic" d="M896.200 71.700a6 6 0 1 0 1.800-4.300M895.700 65.800v3h3M902.400 68.500v3.400l2.300 1.500" style="stroke-width:1.500;stroke:#3c4043"/>
<path class="ic" d="M934.800 67l9.400 9.400M944.200 67l-9.400 9.400" style="stroke-width:1.600;stroke:#3c4043;stroke-linecap:butt"/>
</svg>
<div class="t" style="left:765px;top:65.700px;font-size:12.500px;color:#1f1f1f;-webkit-text-stroke:.250px #1f1f1f">Generate an image</div>
<!-- segmented -->
<div class="abs" style="left:736.300px;top:94.200px;width:214.400px;height:30px;border:1px solid #858887;border-radius:15px;overflow:hidden"><div class="abs" style="left:106px;top:0;width:108px;height:30px;background:#d3e3fd;border-left:1px solid #858887"></div></div>
<div class="t" style="left:736.300px;width:107px;text-align:center;top:104px;font-size:10.800px;color:#444746;-webkit-text-stroke:.200px #444746">Create</div>
<div class="t" style="left:843.300px;width:107px;text-align:center;top:104px;font-size:10.800px;color:#3c4043;-webkit-text-stroke:.200px #3c4043">Edit</div>
<!-- cards -->
<div class="abs" style="left:735.400px;top:137.400px;width:105px;height:81.500px;border-radius:9px;background:#fff"></div>
<div class="abs" style="left:846.500px;top:137.400px;width:104.500px;height:81.500px;border-radius:9px;background:#e9eef6"></div>
<svg style="left:0;top:130px" width="1023" height="100" viewBox="0 130 1023 100">
<path d="M780.200 170.800h14.500M780.200 175.900h14.500M780.200 181h9" stroke="#0b2a5b" stroke-width="1.700"/>
<path d="M791.400 190l.300-3.800 6.600-6.600a1.600 1.600 0 0 1 2.300 0l1.700 1.700a1.600 1.600 0 0 1 0 2.300l-6.600 6.600z" fill="#0b2a5b"/><path d="M793.800 187.900l4.700-4.700" stroke="#fff" stroke-width="1.100" stroke-linecap="round"/>
<g stroke="#444746" stroke-width="2" clip-path="url(#rbclip)"><path d="M885 176.500l15-15M885 183.300l25-25M886.500 188.600l25-25M893.300 188.600l20-20M900.100 188.600l12-12"/></g>
<defs><clipPath id="rbclip"><rect x="889.600" y="169.100" width="18.500" height="18"/></clipPath></defs>
<path d="M905 164.800c.6 4 2.400 5.800 6.400 6.400-4 .600-5.800 2.400-6.400 6.400-.600-4-2.400-5.800-6.400-6.400 4-.600 5.800-2.400 6.400-6.400z" fill="#444746" stroke="#e9eef6" stroke-width="1.300"/>
</svg>
<div class="t" style="left:735.400px;width:105px;text-align:center;top:225.500px;font-size:10.500px;color:#444746">Edit image</div>
<div class="t" style="left:846.500px;width:104.500px;text-align:center;top:225.500px;font-size:10.500px;color:#444746">Replace background</div>
<!-- white container -->
<div class="abs" style="left:735.400px;top:256px;width:215.600px;height:320px;border-radius:9px;background:#fff"></div>
<svg style="left:778px;top:248.600px" width="16" height="8" viewBox="0 0 16 8"><path d="M0 8L6.500 1.200Q8 -.3 9.500 1.200L16 8z" fill="#fff"/></svg>
<div class="abs" style="left:746px;top:268.400px;width:194.700px;height:95.500px;border-radius:9px;background:#f0f4f9"></div>
<div class="t" style="left:758.300px;top:281.500px;font-size:10.800px;color:#1f1f1f">Add a person sitting at this laptop</div>
<div class="abs" style="left:799px;top:376.200px;width:88.400px;height:29.800px;border:1px solid #858887;border-radius:15px"></div>
<div class="t" style="left:799px;width:88.400px;text-align:center;top:385.900px;font-size:10.600px;color:#0b57d0;-webkit-text-stroke:.150px #0b57d0">View more</div>
<!-- result image -->
<div class="abs" style="left:747.400px;top:422.300px;width:191.700px;height:139.700px;border-radius:3.500px;background:#000;overflow:hidden">
<svg style="left:0;top:15.200px;filter:blur(.400px)" width="191.700" height="109.700" viewBox="0 0 191.500 109.600" preserveAspectRatio="none">
<defs>
<linearGradient id="p2wall" x1="0" y1="0" x2="1" y2="0"><stop offset="0" stop-color="#1a1b21"/><stop offset=".45" stop-color="#262730"/><stop offset=".72" stop-color="#4d4e5f"/><stop offset="1" stop-color="#7d7e8b"/></linearGradient>
<linearGradient id="p2shade" x1="0" y1="0" x2="0" y2="1"><stop offset="0" stop-color="#000" stop-opacity="0"/><stop offset=".5" stop-color="#000" stop-opacity=".1"/><stop offset="1" stop-color="#000" stop-opacity=".55"/></linearGradient>
</defs>
<rect width="191.500" height="109.600" fill="url(#p2wall)"/><rect width="191.500" height="109.600" fill="url(#p2shade)"/>
<!-- chair -->
<path d="M4.600 30q0-7.500 7-7.500 8 0 10 9l.500 9q-2.500 4-2 9l8 32 3.500 28H0V40z" fill="#111216"/>
<path d="M15 24q6 3 6.500 12t-2 13l8.500 34 3 26" stroke="#25262c" stroke-width="1.400" fill="none"/>
<path d="M6 34q4 20 12 46t10 29.600" stroke="#1c1d22" stroke-width="1" fill="none"/>
<!-- desk -->
<path d="M84 92h107.500v17.600H84z" fill="#0c0d10" opacity=".8"/>
<path d="M83 82.500L191.500 79.500V87H83z" fill="#1e1f24"/><path d="M83 85.300L191.500 83V92H83z" fill="#0e0f12"/>
<path d="M86 92h3.500v17.600h-3.500zM176 92h4.500v17.600h-4.500z" fill="#060709"/>
<!-- jeans -->
<path d="M52 100q22-6 45-4 14 2 19 13.600H52z" fill="#1f2636"/>
<!-- neck -->
<path d="M55.600 26l9-2 2 13-9 5z" fill="#8f6650"/>
<!-- body hoodie -->
<path d="M37.600 28.500q10-3 18 2l8 10q3 6 4 17l10 26 32-10 .500 7-30 14-22-3-6 12q-4 5-10 6.100H31q-6-20-5.500-35t2-32q3-10 10-14z" fill="#33343b"/>
<path d="M37.600 28.500q10-3 18 2l7 9q-10-4-16 0t-8 7q-6 2-10-2 2-11 9-16z" fill="#2a2b32"/>
<!-- far arm -->
<path d="M84 70l22-1 2 4-20 3z" fill="#2c2d34"/>
<!-- arm -->
<path d="M54 46L77 82 109 77.500" stroke="#3a3b43" stroke-width="9.500" stroke-linecap="round" stroke-linejoin="round" fill="none"/>
<path d="M60 44q7 8 9 18l9 18 31-7" stroke="#4b4c55" stroke-width="3" stroke-linecap="round" stroke-linejoin="round" fill="none"/>
<path d="M50 52l22 34q3 3 8 2l30-6.500" stroke="#24252a" stroke-width="1.200" fill="none"/>
<!-- face -->
<path d="M62 14q8-5 16.600 1.500l.400 7 1.800 5-1.800 1 .200 4q-1 4.500-6 4.500-5.500-1.500-10.600-5z" fill="#b88a6f"/>
<path d="M62 24q1 6 9.500 10.500l-1 2.500q-6-1-9.500-5z" fill="#8f6650" opacity=".7"/>
<ellipse cx="62.300" cy="22" rx="1.600" ry="2.600" fill="#a87a60"/>
<!-- hair -->
<path d="M50 10q2-8.500 13.600-8.600 11-.5 17 6.100l-3 6-3.500-.500-2-3-6 .500-1.500 5.500-1 7-2.600 .500-1.500 3q-6 1.500-8.300-4-2-6-1.200-12.500z" fill="#1b1a1c"/>
<!-- hands -->
<path d="M101.600 71.500q5-3 10-2.500l6 2.500 1.500 4.500-2 3.500-8 .500-7.500-1.500z" fill="#c59a7c"/>
<path d="M102 69q5-2 9-1l5 2-4 1.500-9 1z" fill="#a87a60"/>
<!-- laptop -->
<path d="M121.800 35.200q0-1 1-1l39-.700q1 0 1 1l.4 43.500-41.400 1z" fill="#0d0e12"/>
<path d="M123.200 36.400l38.400-.600.400 40.400-38.800.900z" fill="#1a1b25"/>
<path d="M121 79l42-1 .5 3-30 1.800-12-2z" fill="#26272d"/>
<g fill="#3b3c47"><path d="M141 39l5-1 3 2-2 3-3 3-3-3zM150 38l9 0 2 4-3 4-4-1-3 2-2-4z"/></g>
<rect x="155" y="35.200" width="4" height="1.200" fill="#f59a1c"/>
<path d="M133.500 57v-3l2-1 2 .500 2-3 2-2 1.500 2.500.500 3 .700 3z" fill="#f59a1c"/>
<path d="M144.500 74.500v-3.500l2-.500 1.500 2 2.500-.500 1.500-3.500 1.500 1v5z" fill="#f59a1c"/>
<g fill="#b0781f"><rect x="125" y="39" width="8" height=".800"/><rect x="125" y="43" width="5" height=".600"/><rect x="125" y="47" width="6" height=".600"/><rect x="125" y="52" width="4" height=".600"/><rect x="125" y="63" width="7" height=".600"/><rect x="125" y="67" width="5" height=".600"/><rect x="134" y="63" width="8" height=".600"/><rect x="134" y="67" width="7" height=".600"/></g>
<circle cx="159.500" cy="45" r="1" fill="#f59a1c"/>
<!-- jar -->
<path d="M164.400 74.300q0-1 3.300-1t3.300 1v6.500q0 1-3.300 1t-3.300-1z" fill="#121317"/>
<!-- vase -->
<g stroke="#4a4a50" stroke-width=".700" fill="none"><path d="M178.500 70L171 56M178.700 70L175 53M179 70L180 52M179.300 70L185 54M179.500 70L188 57"/></g>
<g fill="#cfc8bd"><circle cx="171" cy="55.500" r="1.600"/><circle cx="175" cy="52.800" r="1.700"/><circle cx="180" cy="51.800" r="1.800"/><circle cx="185" cy="53.500" r="1.700"/><circle cx="188" cy="56.500" r="1.500"/><circle cx="178" cy="55.500" r="1.300"/><circle cx="183" cy="57" r="1.200"/></g>
<path d="M174.400 70.300q0-1 4.500-1t4.500 1v10.300q0 1-4.500 1t-4.500-1z" fill="#18191e"/><path d="M180.500 69.500h1.500v12h-1.500z" fill="#54555e" opacity=".6"/>
</svg>


</div>
<!-- scrollbar -->
<div class="abs" style="left:954px;top:138.300px;width:6px;height:389px;border-radius:3px;background:#80868b"></div>
</div>
</div>

<!-- RAIL -->
<div class="abs" style="left:975.300px;top:219px;width:35.600px;height:35.400px;border-radius:12px;background:#d3e3fd"></div>
<div class="abs" style="left:975.300px;top:257.400px;width:35.600px;height:143.600px;border-radius:17.800px;background:#eef2f9"></div>
<svg style="left:0;top:0" width="1023" height="575" viewBox="0 0 1023 575">
<!-- active: image sparkle -->
<path d="M993.200 231.800h-4.200a1.200 1.200 0 0 0-1.200 1.200v7.300a1.200 1.200 0 0 0 1.200 1.200h7.400a1.200 1.200 0 0 0 1.200-1.200v-4.200" fill="none" stroke="#0b2a5b" stroke-width="1.300"/><path d="M996.600 229.800c.25 1.600.95 2.300 2.500 2.500-1.600.250-2.300.950-2.500 2.500-.250-1.600-.950-2.300-2.500-2.500 1.600-.250 2.300-.950 2.500-2.500zM989.300 239.700l2-2.400 1.400 1.600 1.100-1.200 1.900 2z" fill="#0b2a5b"/>
<!-- templates -->
<path class="ic" d="M987.500 275.800h11v8h-11zM989.500 278.600h4.500M989.500 281.100h4.500M996.200 278.200v3.300" style="stroke-width:1.300;stroke-linecap:butt"/>
<!-- stock -->
<path class="ic" d="M990.200 307.300h8.300v8.300h-8.300zM987.800 310v8h8" style="stroke-width:1.300;stroke-linecap:butt"/><circle class="ic" cx="994.300" cy="311.400" r="1.800" style="stroke-width:1.200"/>
<!-- image search -->
<path class="ic" d="M992.200 341.300h-4v9.700h9.700v-3.500" style="stroke-width:1.300;stroke-linecap:butt"/><circle class="ic" cx="995.800" cy="343" r="2.100" style="stroke-width:1.200"/><path class="ic" d="M997.400 344.700l1.800 1.800" style="stroke-width:1.300"/><path class="fi" d="M989.400 349.400l1.700-2.200 1.300 1.400 1-1 1.700 1.800z"/>
<!-- folder -->
<path class="ic" d="M987.700 374.300h3.800l1.400 1.600h5.600v7.400h-10.800z" style="stroke-width:1.300;stroke-linecap:butt"/>
</svg>
<div class="abs" style="left:1004.500px;top:536.500px;width:36px;height:36px;border-radius:18px;background:#fff;box-shadow:0 1px 3px rgba(0,0,0,.3)"></div>
<svg style="left:1010px;top:548px" width="10" height="12" viewBox="0 0 10 12"><path d="M7 2.500L3.500 6 7 9.500" fill="none" stroke="#444746" stroke-width="1.500"/></svg>

</body>
</html>
